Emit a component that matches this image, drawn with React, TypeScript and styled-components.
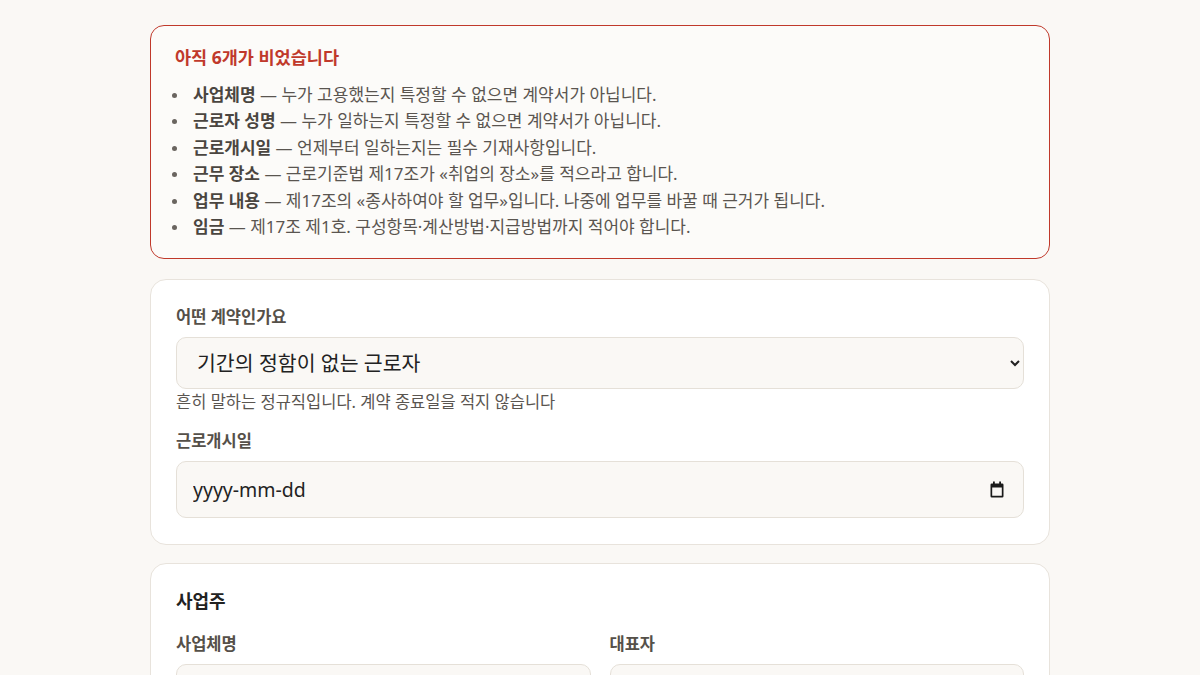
import React from "react"
import styled, { createGlobalStyle } from "styled-components"

const GlobalStyle = createGlobalStyle`
  * { box-sizing: border-box; }
  body {
    margin: 0;
    background: #faf8f5;
    font-family: "Noto Sans", "Noto Sans CJK KR", sans-serif;
    color: #333;
  }
`

const missing = [
  { name: "사업체명", text: "누가 고용했는지 특정할 수 없으면 계약서가 아닙니다." },
  { name: "근로자 성명", text: "누가 일하는지 특정할 수 없으면 계약서가 아닙니다." },
  { name: "근로개시일", text: "언제부터 일하는지는 필수 기재사항입니다." },
  { name: "근무 장소", text: "근로기준법 제17조가 «취업의 장소»를 적으라고 합니다." },
  { name: "업무 내용", text: "제17조의 «종사하여야 할 업무»입니다. 나중에 업무를 바꿀 때 근거가 됩니다." },
  { name: "임금", text: "제17조 제1호. 구성항목·계산방법·지급방법까지 적어야 합니다." },
]

const CalendarIcon = () => (
  <svg width="16" height="17" viewBox="0 0 16 17" aria-hidden="true">
    <path
      fillRule="evenodd"
      fill="#1a1a1a"
      d="M4 0.5h1.8v2H10.2v-2H12v2h1.2A1.3 1.3 0 0 1 14.5 3.8v11.4a1.3 1.3 0 0 1-1.3 1.3H2.8a1.3 1.3 0 0 1-1.3-1.3V3.8A1.3 1.3 0 0 1 2.8 2.5H4z M3.2 6.6v8.2h9.6V6.6z"
    />
  </svg>
)

export default function App() {
  return (
    <>
      <GlobalStyle />
      <Page>
        <Alert>
          <AlertTitle>아직 {missing.length}개가 비었습니다</AlertTitle>
          <AlertList>
            {missing.map(({ name, text }) => (
              <li key={name}>
                <strong>{name}</strong> — {text}
              </li>
            ))}
          </AlertList>
        </Alert>

        <Card>
          <Field>
            <Label>어떤 계약인가요</Label>
            <Select defaultValue="open">
              <option value="open">기간의 정함이 없는 근로자</option>
              <option value="fixed">기간의 정함이 있는 근로자</option>
            </Select>
            <Hint>흔히 말하는 정규직입니다. 계약 종료일을 적지 않습니다</Hint>
          </Field>
          <Field>
            <Label>근로개시일</Label>
            <DateBox>
              <DateText placeholder="yyyy-mm-dd" />
              <CalendarButton type="button" aria-label="날짜 선택">
                <CalendarIcon />
              </CalendarButton>
            </DateBox>
          </Field>
        </Card>

        <Card>
          <SectionTitle>사업주</SectionTitle>
          <TwoCols>
            <Field>
              <Label>사업체명</Label>
              <TextInput />
            </Field>
            <Field>
              <Label>대표자</Label>
              <TextInput />
            </Field>
          </TwoCols>
        </Card>
      </Page>
    </>
  )
}

const Page = styled.main`
  width: 900px;
  margin: 0 auto;
  padding: 25px 0 40px;
  display: flex;
  flex-direction: column;
  gap: 18px;
`

const Alert = styled.section`
  background: #fcfbf9;
  border: 1px solid #c0392b;
  border-radius: 14px;
  padding: 19px 24px 18px;
  margin-bottom: 2px;
`

const AlertTitle = styled.h3`
  margin: 0 0 13px;
  font-size: 17.5px;
  line-height: 24px;
  font-weight: 700;
  color: #c0392b;
`

const AlertList = styled.ul`
  margin: 0;
  padding-left: 18px;
  list-style: none;
  font-size: 17px;
  line-height: 26.4px;
  color: #5a5550;

  li {
    position: relative;
  }

  li::before {
    content: "";
    position: absolute;
    left: -21px;
    top: 11px;
    width: 5px;
    height: 5px;
    border-radius: 50%;
    background: #6a6560;
  }

  strong {
    color: #4a4540;
    font-weight: 700;
  }
`

const Card = styled.section`
  background: #fff;
  border: 1px solid #e8e3dc;
  border-radius: 16px;
  padding: 26px 25px 26px;
  display: flex;
  flex-direction: column;
  gap: 18px;
`

const Field = styled.div`
  display: flex;
  flex-direction: column;
`

const Label = styled.label`
  font-size: 16.5px;
  line-height: 22px;
  font-weight: 700;
  color: #555049;
  margin-bottom: 9px;
`

const controlBase = `
  width: 100%;
  background: #faf8f5;
  border: 1px solid #e5e0d8;
  border-radius: 10px;
  font-family: "Noto Sans", "Noto Sans CJK KR", sans-serif;
  color: #222;
  outline: none;
`

const Select = styled.select`
  ${controlBase}
  height: 52px;
  padding: 0 12px 0 16px;
  font-size: 20.5px;
`

const DateBox = styled.div`
  ${controlBase}
  height: 57px;
  padding: 0 18px 0 16px;
  display: flex;
  align-items: center;
  gap: 12px;
`

const DateText = styled.input`
  flex: 1;
  min-width: 0;
  border: none;
  background: transparent;
  outline: none;
  padding: 0;
  font-family: "Noto Sans", "Noto Sans CJK KR", sans-serif;
  font-size: 19.5px;
  color: #222;

  &::placeholder {
    color: #222;
    opacity: 1;
  }
`

const CalendarButton = styled.button`
  display: flex;
  align-items: center;
  justify-content: center;
  padding: 0;
  border: none;
  background: none;
  cursor: pointer;
`

const TextInput = styled.input`
  ${controlBase}
  height: 52px;
  padding: 0 16px;
  font-size: 19px;
`

const Hint = styled.p`
  margin: 2px 0 0;
  font-size: 16.5px;
  line-height: 21px;
  color: #5a5550;
`

const SectionTitle = styled.h2`
  margin: 0 0 3px;
  font-size: 18px;
  line-height: 22px;
  font-weight: 700;
  color: #222;
`

const TwoCols = styled.div`
  display: grid;
  grid-template-columns: 1fr 1fr;
  gap: 19px;
`
